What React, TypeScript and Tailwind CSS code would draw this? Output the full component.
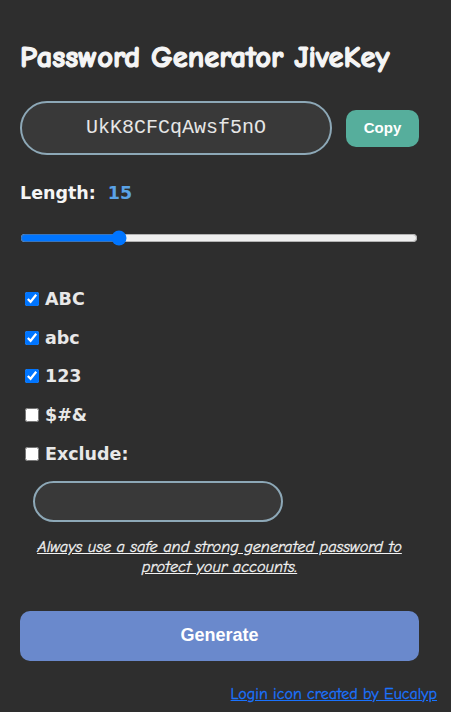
import { useState } from 'react';

const comic = '"Comic Neue", "Comic Sans MS", "DejaVu Sans", sans-serif';

const Option = ({ label, checked }: { label: string; checked: boolean }) => {
  const [on, setOn] = useState(checked);
  return (
    <label className="flex items-center h-[20px] pl-[5px] gap-[6px] text-[17.5px] font-bold text-[#e8e8e8] font-['DejaVu_Sans',sans-serif]">
      <input type="checkbox" checked={on} onChange={() => setOn(!on)} className="w-[14px] h-[14px] accent-[#0075ff]" />
      <span>{label}</span>
    </label>
  );
};

export default function App() {
  const [length, setLength] = useState(15);

  return (
    <div className="min-h-[712px] bg-[#2e2e2e] text-white">
      <div className="w-[399px] ml-5 pt-[40px]">
        <h1
          className="text-[30.5px] font-bold leading-[36px] text-[#f5f5f5] [-webkit-text-stroke:1.2px_#f5f5f5]"
          style={{ fontFamily: comic }}
        >
          Password Generator JiveKey
        </h1>

        <div className="flex items-center mt-[25px]">
          <div className="w-[312px] h-[54px] rounded-full border-2 border-[#8da8b7] bg-[#393939] flex items-center justify-center">
            <span className="text-[20px] text-[#e6e6e6] font-['Liberation_Mono',monospace]">UkK8CFCqAwsf5nO</span>
          </div>
          <button className="ml-[14px] w-[73px] h-[37px] rounded-[10px] bg-[#56ae9c] text-white text-[15px] font-bold font-['Liberation_Sans',Arial,sans-serif]">
            Copy
          </button>
        </div>

        <div className="mt-[27px] flex items-center gap-[12px] h-[22px] text-[17.5px] font-bold font-['DejaVu_Sans',sans-serif]">
          <span className="text-[#f5f5f5]">Length:</span>
          <span className="text-[#5aa2e6]">{length}</span>
        </div>

        <input
          type="range"
          min={4}
          max={50}
          value={length}
          onChange={(e) => setLength(Number(e.target.value))}
          className="block w-[398px] mt-[26px] accent-[#0075ff]"
        />

        <div className="flex flex-col gap-[18.7px] mt-[43px]">
          <Option label="ABC" checked />
          <Option label="abc" checked />
          <Option label="123" checked />
          <Option label="$#&" checked={false} />
          <Option label="Exclude:" checked={false} />
        </div>

        <div className="ml-[13px] mt-[17px] w-[250px] h-[41px] rounded-full border-2 border-[#8da8b7] bg-[#393939]" />

        <p
          className="mt-[15px] px-[10px] text-center text-[16.3px] leading-[20px] italic underline text-[#f2f2f2] [-webkit-text-stroke:0.3px_#f2f2f2]"
          style={{ fontFamily: comic }}
        >
          Always use a safe and strong generated password to protect your accounts.
        </p>

        <button className="mt-[34px] w-[399px] h-[50px] rounded-[10px] bg-[#6a89cc] text-white text-[18px] font-bold font-['Liberation_Sans',Arial,sans-serif]">
          Generate
        </button>
      </div>

      <div className="flex justify-end pr-[14px] mt-[21px]">
        <a href="#" className="text-[16px] text-[#1a73ff] underline [-webkit-text-stroke:0.3px_#1a73ff]" style={{ fontFamily: comic }}>
          Login icon created by Eucalyp
        </a>
      </div>
    </div>
  );
}
